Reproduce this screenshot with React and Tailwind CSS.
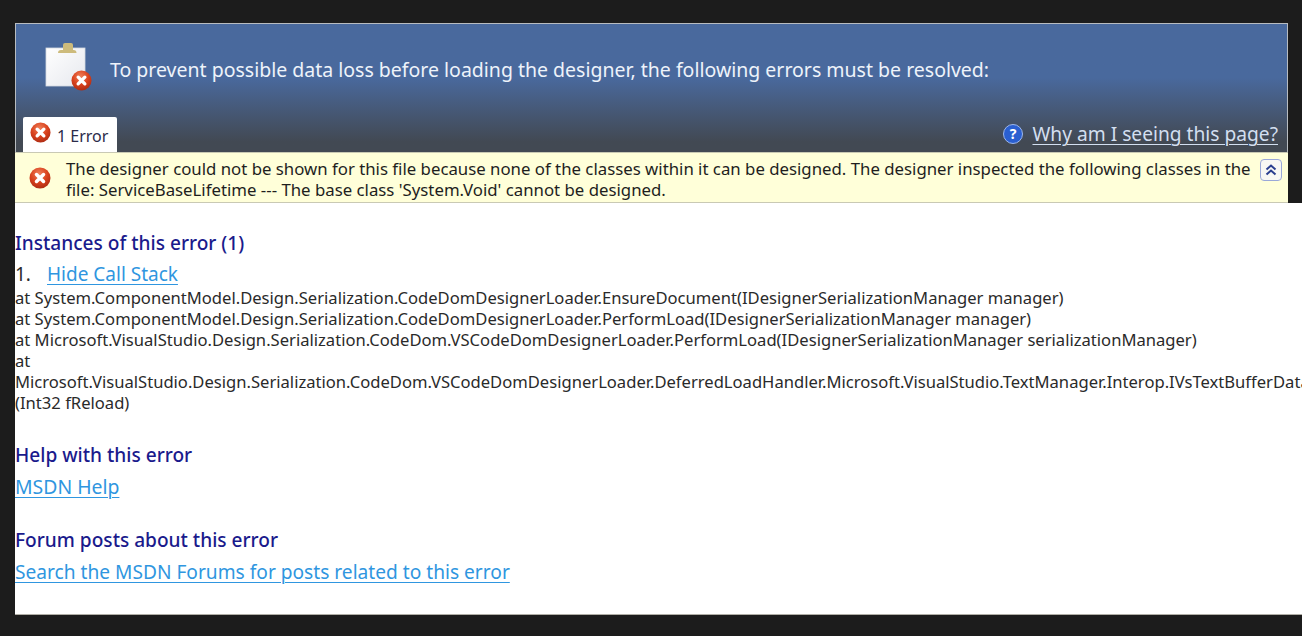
import React from 'react';

function ErrorDot({ size = 22 }) {
  return (
    <svg width={size} height={size} viewBox="0 0 22 22" className="shrink-0">
      <defs>
        <radialGradient id="errGrad" cx="45%" cy="30%" r="75%">
          <stop offset="0%" stopColor="#f0805a" />
          <stop offset="55%" stopColor="#d8401c" />
          <stop offset="100%" stopColor="#a82a12" />
        </radialGradient>
      </defs>
      <circle cx="11" cy="11" r="10.5" fill="url(#errGrad)" />
      <path d="M7.500 7.500l7 7M14.500 7.500l-7 7" stroke="#fff" strokeWidth="3.500" strokeLinecap="round" />
    </svg>
  );
}

function ClipboardIcon() {
  return (
    <div className="relative w-[48px] h-[50px] shrink-0">
      <svg width="48" height="50" viewBox="0 0 48 50">
        <defs>
          <linearGradient id="paperGrad" x1="0" y1="0" x2="1" y2="1">
            <stop offset="0%" stopColor="#ffffff" />
            <stop offset="100%" stopColor="#e6e8ee" />
          </linearGradient>
        </defs>
        <rect x="1" y="5" width="39" height="38" fill="url(#paperGrad)" stroke="#d5d9e2" strokeWidth="0.8" />
        <path d="M12 10q0-3 3-3h2V2q0-2 2-2h6q2 0 2 2v5h0.500q3 0 3 3z" transform="translate(1 0)" fill="#cdbb7c" />
      </svg>
      <div className="absolute left-[26px] top-[27px]">
        <ErrorDot size={21} />
      </div>
    </div>
  );
}

function Heading({ children }) {
  return <h2 className="text-[19.1px] leading-[24px] font-medium text-[#1a1a8c]">{children}</h2>;
}

function Link({ children }) {
  return <a className="text-[#2f96e0] underline underline-offset-[3px] decoration-1">{children}</a>;
}

export default function App() {
  return (
    <div className="h-[636px] overflow-hidden bg-[#1c1c1c] pt-[23px] pl-[15px] font-['Noto_Sans',sans-serif]">
      {/* HEADER */}
      <div className="w-[1273px] h-[129px] border-t border-l border-r border-[#b8bcc0] bg-gradient-to-b from-[#49699d] from-[42%] to-[#424953] to-[92%] flex flex-col">
        <div className="flex items-center h-[88px] pl-[29px] gap-[17px]">
          <ClipboardIcon />
          <p className="pt-[3px] text-[19.5px] text-[#eef3fa] whitespace-nowrap">
            To prevent possible data loss before loading the designer, the following errors must be resolved:
          </p>
        </div>
        <div className="flex items-end justify-between flex-1 pl-[7px] pr-[9px]">
          <div className="h-[35px] w-[94px] bg-white rounded-t-[2px] flex items-start pt-[5px] pl-[7px] gap-[6px]">
            <ErrorDot size={21} />
            <span className="pt-[2px] text-[16px] leading-[24px] text-[#2b2b4a]">1 Error</span>
          </div>
          <div className="flex items-center gap-[9px] pb-[5px]">
            <svg width="20" height="20" viewBox="0 0 20 20">
              <circle cx="10" cy="10" r="9.500" fill="#2a5fd0" stroke="#9db8ec" strokeWidth="1" />
              <text x="10" y="15" textAnchor="middle" fontSize="14" fontWeight="700" fill="#fff" fontFamily="Noto Sans">?</text>
            </svg>
            <a className="text-[19.2px] leading-[26px] text-[#d3dff0] underline underline-offset-[3px] decoration-1">Why am I seeing this page?</a>
          </div>
        </div>
      </div>

      {/* ERROR BAR */}
      <div className="w-[1273px] h-[51px] bg-[#ffffd9] border-t border-b border-[#c9c9b4] flex items-center pl-[14px] pr-[6px]">
        <ErrorDot size={22} />
        <p className="ml-[15px] pt-[2px] flex-1 text-[16.8px] leading-[21px] text-[#1e1e1e] whitespace-nowrap">
          The designer could not be shown for this file because none of the classes within it can be designed. The designer inspected the following classes in the
          <br />
          file: ServiceBaseLifetime --- The base class 'System.Void' cannot be designed.
        </p>
        <div className="w-[22px] h-[22px] mb-[16px] border border-[#9aa8d8] rounded-[4px] bg-[#f8f8f4] flex items-center justify-center">
          <svg width="14" height="14" viewBox="0 0 14 14" fill="none" stroke="#2a3f8f" strokeWidth="2">
            <path d="M2.500 6.500L7 2.500l4.500 4M2.500 11.500L7 7.500l4.500 4" />
          </svg>
        </div>
      </div>

      {/* BODY */}
      <div className="h-[412px] bg-white border-b border-[#b0aea6] pt-[28px]">
        <Heading>Instances of this error (1)</Heading>
        <div className="mt-[7px] text-[19px] leading-[25px] text-[#2b2b2b]">
          <span className="inline-block w-[32px]">1.</span>
          <Link>Hide Call Stack</Link>
        </div>
        <div className="text-[16.6px] leading-[21px] text-[#2a2a2a] whitespace-nowrap">
          <div>at System.ComponentModel.Design.Serialization.CodeDomDesignerLoader.EnsureDocument(IDesignerSerializationManager manager)</div>
          <div>at System.ComponentModel.Design.Serialization.CodeDomDesignerLoader.PerformLoad(IDesignerSerializationManager manager)</div>
          <div>at Microsoft.VisualStudio.Design.Serialization.CodeDom.VSCodeDomDesignerLoader.PerformLoad(IDesignerSerializationManager serializationManager)</div>
          <div>at</div>
          <div>Microsoft.VisualStudio.Design.Serialization.CodeDom.VSCodeDomDesignerLoader.DeferredLoadHandler.Microsoft.VisualStudio.TextManager.Interop.IVsTextBufferDataEvents.OnLoadCompleted</div>
          <div>(Int32 fReload)</div>
        </div>

        <div className="mt-[30px]">
          <Heading>Help with this error</Heading>
          <div className="mt-[7px] text-[19.4px] leading-[26px]"><Link>MSDN Help</Link></div>
        </div>

        <div className="mt-[28px]">
          <Heading>Forum posts about this error</Heading>
          <div className="mt-[7px] text-[19.15px] leading-[26px]"><Link>Search the MSDN Forums for posts related to this error</Link></div>
        </div>
      </div>
    </div>
  );
}
